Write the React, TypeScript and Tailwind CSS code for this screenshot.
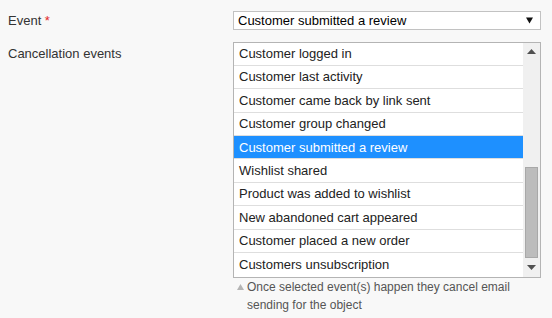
const EVENTS = [
  'Customer logged in',
  'Customer last activity',
  'Customer came back by link sent',
  'Customer group changed',
  'Customer submitted a review',
  'Wishlist shared',
  'Product was added to wishlist',
  'New abandoned cart appeared',
  'Customer placed a new order',
  'Customers unsubscription',
]

const SELECTED = 'Customer submitted a review'

export default function App() {
  return (
    <div className="w-[552px] h-[318px] bg-[#f8f8f8] pl-2 pt-[11px] font-['Liberation_Sans',Arial,sans-serif] text-[13px] text-[#333] overflow-hidden">
      {/* event select */}
      <div className="flex items-center">
        <div className="w-[225px]">
          Event <span className="text-[#e22626]">*</span>
        </div>
        <div className="w-[308px] h-[19px] border border-[#c2c2c2] bg-white flex items-center justify-between pl-[4px] pr-[7px] text-black">
          <span>{SELECTED}</span>
          <svg width="7" height="7" viewBox="0 0 7 7"><path d="M0 0.5H7L3.5 6.5z" fill="#111" /></svg>
        </div>
      </div>

      {/* cancellation events */}
      <div className="flex mt-[11px]">
        <div className="w-[225px] pt-[2px]">Cancellation events</div>
        <div className="w-[308px]">
          <div className="h-[236px] border border-[#b4b4b4] bg-white flex">
            <div className="flex-1 flex flex-col">
              {EVENTS.map((e) => (
                <div
                  key={e}
                  className={
                    'h-[23.4px] flex items-center pl-[5px] border-b border-[#dedede] last:border-b-0 ' +
                    (e === SELECTED ? 'bg-[#1e90ff] text-white border-[#1e90ff]' : 'text-[#222]')
                  }
                >
                  {e}
                </div>
              ))}
            </div>
            <div className="w-[17px] bg-[#f0f0f0] flex flex-col items-center">
              <div className="h-[18px] flex items-center justify-center">
                <svg width="9" height="5" viewBox="0 0 9 5"><path d="M4.5 0L9 5H0z" fill="#505050" /></svg>
              </div>
              <div className="mt-[106px] w-[13px] h-[91px] bg-[#bcbcbc] border border-[#a8a8a8]" />
              <div className="flex-1 flex items-center justify-center">
                <svg width="9" height="5" viewBox="0 0 9 5"><path d="M0 0H9L4.5 5z" fill="#505050" /></svg>
              </div>
            </div>
          </div>
          {/* hint */}
          <div className="flex pl-[4px] text-[12px] leading-[18px] text-[#555]">
            <span className="w-[10px] shrink-0 flex items-center h-[18px]">
              <svg width="7" height="6" viewBox="0 0 7 6"><path d="M3.5 0L7 6H0z" fill="#b4b4b4" /></svg>
            </span>
            <span>Once selected event(s) happen they cancel email sending for the object</span>
          </div>
        </div>
      </div>
    </div>
  )
}
